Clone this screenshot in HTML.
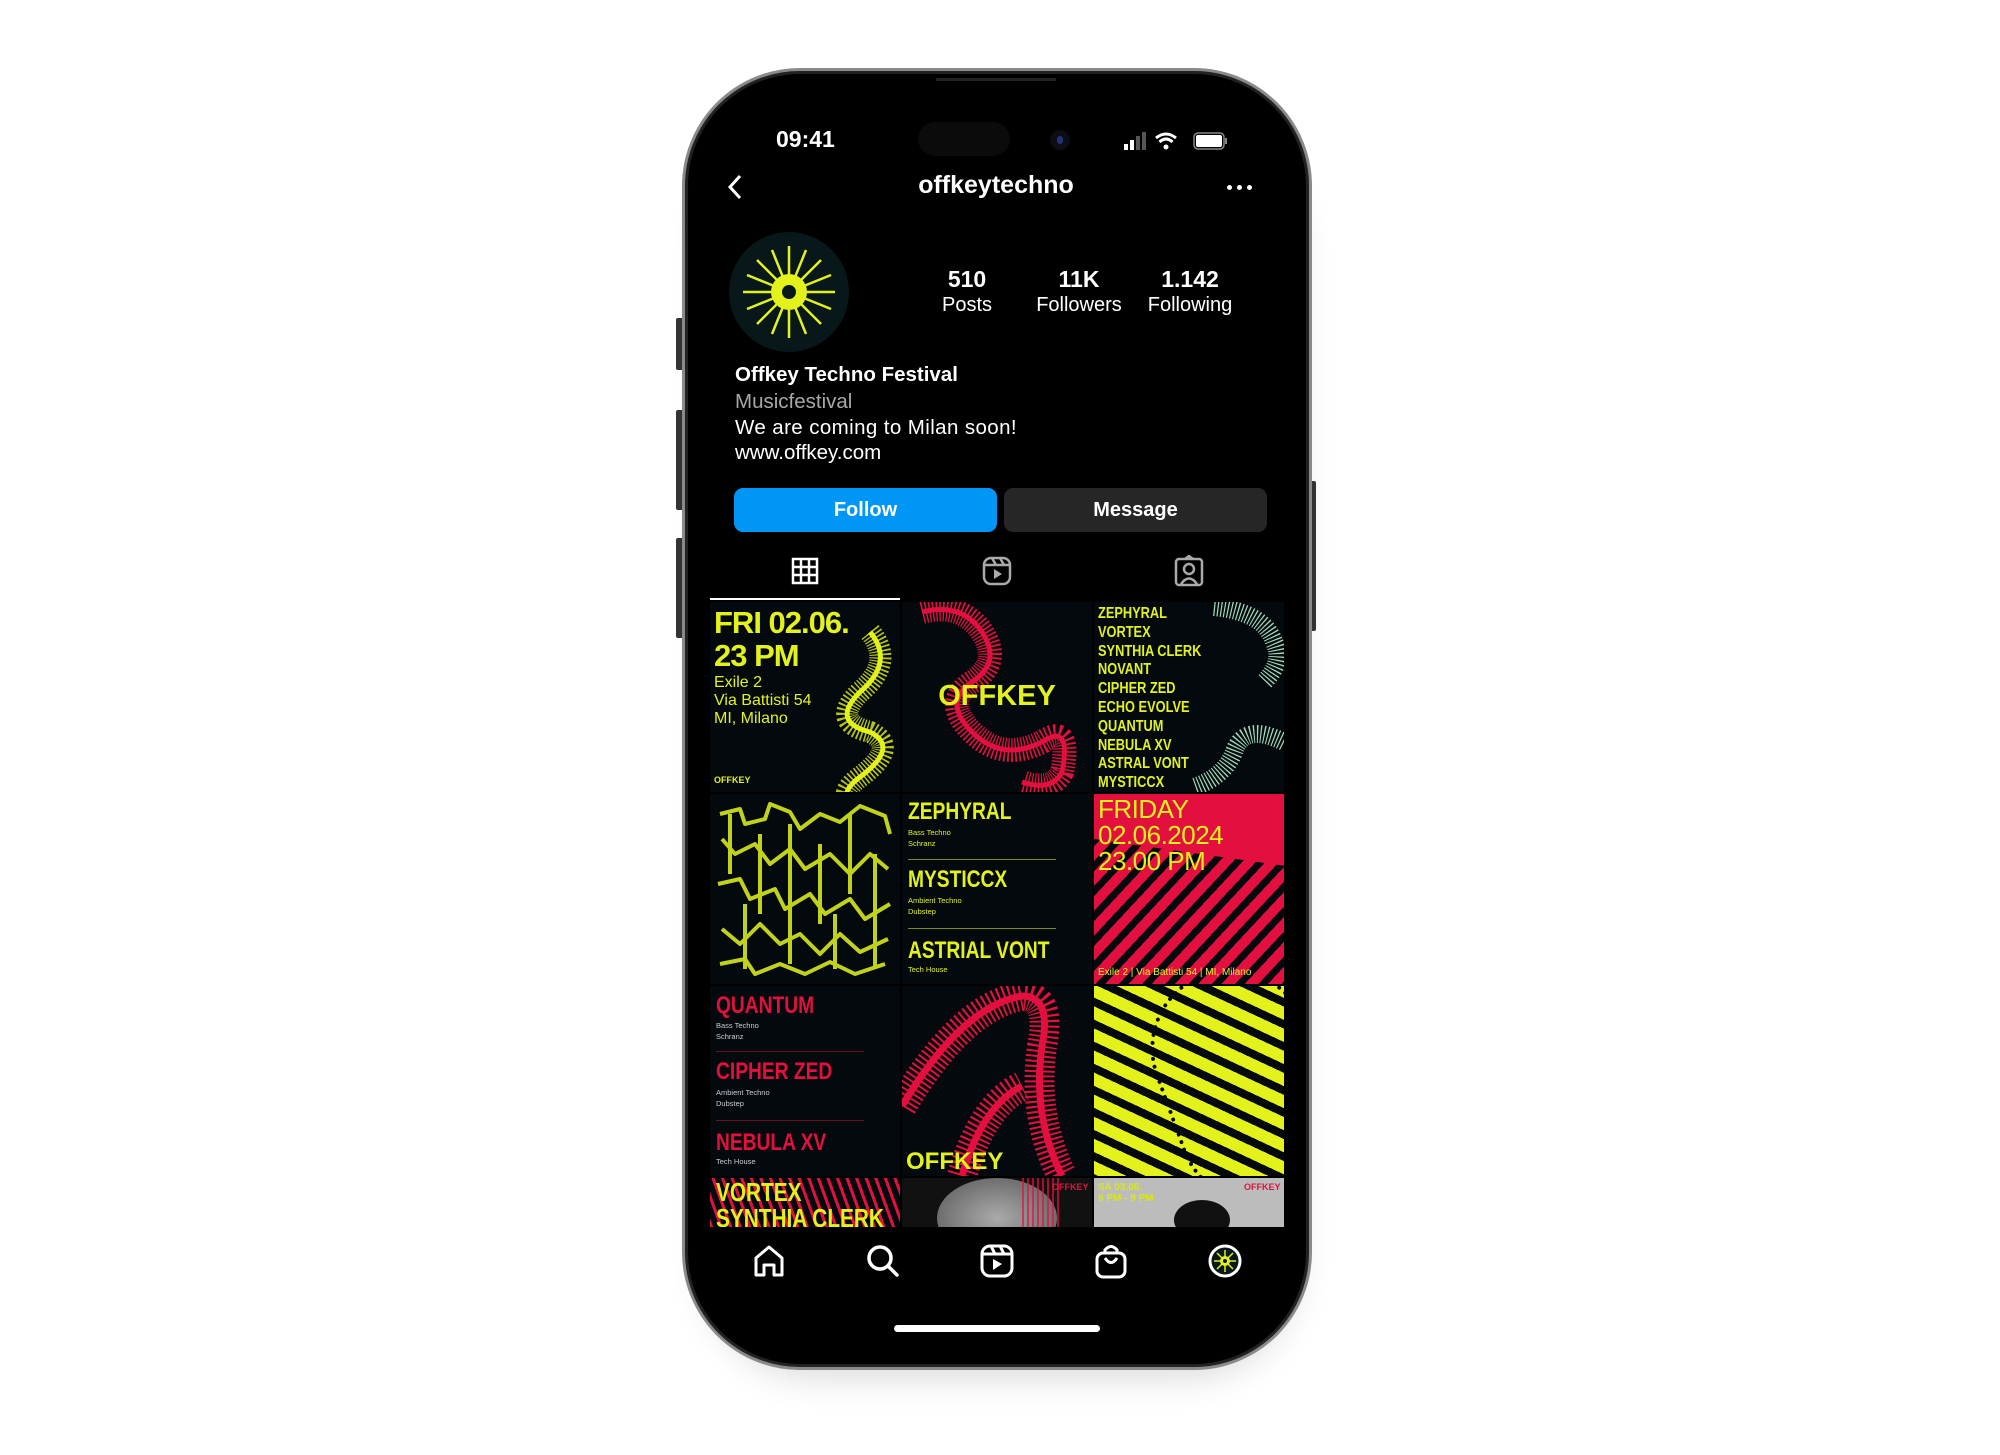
<!DOCTYPE html>
<html><head><meta charset="utf-8"><style>
*{margin:0;padding:0;box-sizing:border-box}
body{width:2000px;height:1455px;background:#fff;position:relative;overflow:hidden;font-family:"Liberation Sans",sans-serif}
#wrap{position:absolute;left:0;top:0;width:2000px;height:1455px;transform:translate(-4px,-2px)}
.a{position:absolute}
.w{color:#fff}
.cell{position:absolute;width:190px;height:190px;background:#03090c;overflow:hidden}
.y{color:#e3f21a}.r{color:#e3103f}
.cond{font-weight:bold;transform-origin:0 0;transform:scaleX(.8);white-space:nowrap}
</style></head><body><div id="wrap">
<div class="a" style="left:710px;top:120px;width:590px;height:1240px;border-radius:110px;box-shadow:0 18px 36px rgba(0,0,0,0.16)"></div>
<div class="a" style="left:680px;top:320px;width:8px;height:52px;background:#333;border-radius:2px"></div>
<div class="a" style="left:680px;top:412px;width:8px;height:100px;background:#333;border-radius:2px"></div>
<div class="a" style="left:680px;top:540px;width:8px;height:100px;background:#333;border-radius:2px"></div>
<div class="a" style="left:1312px;top:483px;width:8px;height:150px;background:#333;border-radius:2px"></div>
<div class="a" style="left:686px;top:70px;width:630px;height:1302px;border-radius:118px;background:#000;border:3px solid #8a8a8a;box-shadow:inset 0 0 0 3px #222"></div>
<div class="a" style="left:940px;top:80px;width:120px;height:3px;background:#222"></div>
<div class="a w" style="left:780px;top:128px;font-size:23px;font-weight:bold">09:41</div>
<div class="a" style="left:922px;top:124px;width:92px;height:34px;border-radius:17px;background:#0b0b0b"></div>
<div class="a" style="left:1054px;top:132px;width:20px;height:20px;border-radius:10px;background:#0d0d15"><div class="a" style="left:7px;top:6px;width:6px;height:8px;border-radius:3px;background:#223377"></div></div>
<svg class="a" style="left:1128px;top:132px" width="106" height="22" viewBox="0 0 106 22">
<rect x="0" y="14" width="4" height="6" fill="#fff"/><rect x="6" y="10" width="4" height="10" fill="#fff"/><rect x="12" y="6" width="4" height="14" fill="#555"/><rect x="18" y="2" width="4" height="18" fill="#555"/>
<path d="M32 8 Q42 0 52 8" stroke="#fff" stroke-width="3" fill="none"/><path d="M35.5 12 Q42 6 48.5 12" stroke="#fff" stroke-width="3" fill="none"/><circle cx="42" cy="17" r="2.5" fill="#fff"/>
<rect x="70" y="3" width="30" height="16" rx="4" stroke="#888" stroke-width="1.5" fill="none"/><rect x="72" y="5" width="26" height="12" rx="2" fill="#fff"/><rect x="101" y="8" width="2" height="6" fill="#888"/>
</svg>
<svg class="a" style="left:728px;top:175px" width="22" height="28"><path d="M16 3 L6 14 L16 25" stroke="#fff" stroke-width="3" fill="none"/></svg>
<div class="a w" style="left:850px;top:173px;width:300px;text-align:center;font-size:25px;font-weight:bold">offkeytechno</div>
<div class="a" style="left:1231px;top:187px;width:5px;height:5px;border-radius:3px;background:#fff;box-shadow:10px 0 #fff,20px 0 #fff"></div>
<div class="a" style="left:733px;top:234px;width:120px;height:120px;border-radius:60px;background:#08171a"></div>
<svg class="a" style="left:733px;top:234px" width="120" height="120" viewBox="0 0 120 120">
<g stroke="#e3f21a" stroke-width="2.5" fill="none">
<path d="M60 60 L60 14 M60 60 L60 106 M60 60 L14 60 M60 60 L106 60 M60 60 L28 28 M60 60 L92 92 M60 60 L92 28 M60 60 L28 92 M60 60 L43 18 M60 60 L77 102 M60 60 L18 77 M60 60 L102 43 M60 60 L77 18 M60 60 L43 102 M60 60 L18 43 M60 60 L102 77"/></g>
<circle cx="60" cy="60" r="18" fill="#e3f21a"/><circle cx="60" cy="60" r="7" fill="#08171a"/>
</svg>
<div class="a w" style="left:921px;top:268px;width:100px;text-align:center;font-size:23px;font-weight:bold">510</div>
<div class="a w" style="left:921px;top:296px;width:100px;text-align:center;font-size:20px">Posts</div>
<div class="a w" style="left:1028px;top:268px;width:110px;text-align:center;font-size:23px;font-weight:bold">11K</div>
<div class="a w" style="left:1028px;top:296px;width:110px;text-align:center;font-size:20px">Followers</div>
<div class="a w" style="left:1139px;top:268px;width:110px;text-align:center;font-size:23px;font-weight:bold">1.142</div>
<div class="a w" style="left:1139px;top:296px;width:110px;text-align:center;font-size:20px">Following</div>
<div class="a w" style="left:739px;top:365px;font-size:20.5px;font-weight:bold">Offkey Techno Festival</div>
<div class="a" style="left:739px;top:392px;font-size:20.5px;color:#a8a8a8">Musicfestival</div>
<div class="a w" style="left:739px;top:418px;font-size:20.5px;letter-spacing:0.4px">We are coming to Milan soon!</div>
<div class="a w" style="left:739px;top:443px;font-size:20.5px">www.offkey.com</div>
<div class="a w" style="left:738px;top:490px;width:263px;height:44px;border-radius:9px;background:#0096f6;text-align:center;line-height:44px;font-size:20px;font-weight:bold">Follow</div>
<div class="a w" style="left:1008px;top:490px;width:263px;height:44px;border-radius:9px;background:#262626;text-align:center;line-height:44px;font-size:20px;font-weight:bold">Message</div>
<svg class="a" style="left:795px;top:559px" width="28" height="28"><g stroke="#fff" stroke-width="2.5" fill="none"><rect x="2" y="2" width="24" height="24"/><path d="M10 2V26M18 2V26M2 10H26M2 18H26"/></g></svg>
<svg class="a" style="left:986px;top:557px" width="30" height="32"><g stroke="#aaa" stroke-width="2.5" fill="none"><rect x="2" y="3" width="26" height="26" rx="7"/><path d="M2 10H28M10 3L14 10M18 3L22 10"/></g><path d="M12 14L20 19L12 24Z" fill="#aaa"/></svg>
<svg class="a" style="left:1178px;top:557px" width="30" height="32"><g stroke="#aaa" stroke-width="2.5" fill="none"><rect x="2" y="4" width="26" height="26" rx="3"/><circle cx="15" cy="14" r="5"/><path d="M7 29Q15 18 23 29M11 4L15 1L19 4"/></g></svg>
<div class="a" style="left:714px;top:600px;width:190px;height:2px;background:#fff"></div>

<div class="cell" style="left:714px;top:604px">
<svg class="a" style="left:0;top:0" width="190" height="190"><path d="M160 30 Q185 60 150 90 Q120 120 160 130 Q190 145 150 175 Q130 190 140 200" stroke="#e3f21a" stroke-width="22" fill="none" stroke-dasharray="1.5 2" opacity="0.8"/><path d="M160 30 Q185 60 150 90 Q120 120 160 130 Q190 145 150 175 Q130 190 140 200" stroke="#e3f21a" stroke-width="5" fill="none"/></svg>
<div class="a y" style="left:4px;top:4px;font-size:31px;font-weight:bold;line-height:33px;letter-spacing:-1px">FRI 02.06.<br>23 PM</div>
<div class="a y" style="left:4px;top:72px;font-size:16px;line-height:18px">Exile 2<br>Via Battisti 54<br>MI, Milano</div>
<div class="a y" style="left:4px;top:173px;font-size:9px;font-weight:bold">OFFKEY</div>
</div>
<div class="cell" style="left:906px;top:604px">
<svg class="a" width="190" height="190"><path d="M20 10 Q60 0 80 30 Q100 60 70 80 Q40 100 70 130 Q100 160 140 140 Q170 120 160 170 Q150 190 120 180" stroke="#e3103f" stroke-width="24" fill="none" stroke-dasharray="1.5 2"/><path d="M20 10 Q60 0 80 30 Q100 60 70 80 Q40 100 70 130 Q100 160 140 140 Q170 120 160 170 Q150 190 120 180" stroke="#e3103f" stroke-width="5" fill="none"/></svg>
<div class="a y" style="left:0;width:190px;top:78px;text-align:center;font-size:29px;font-weight:bold">OFFKEY</div>
</div>
<div class="cell" style="left:1098px;top:604px">
<svg class="a" width="190" height="190"><path d="M120 5 Q170 10 180 40 Q190 60 170 80 M190 140 Q150 120 140 150 Q130 175 100 185" stroke="#9fdcbc" stroke-width="18" fill="none" stroke-dasharray="1.2 2.2"/></svg>
<div class="a y cond" style="left:4px;top:3px;font-size:16px;line-height:18.8px">ZEPHYRAL<br>VORTEX<br>SYNTHIA CLERK<br>NOVANT<br>CIPHER ZED<br>ECHO EVOLVE<br>QUANTUM<br>NEBULA XV<br>ASTRAL VONT<br>MYSTICCX</div>
</div>
<div class="cell" style="left:714px;top:796px">
<svg class="a" width="190" height="190"><g stroke="#d6e81c" stroke-width="4" fill="none" stroke-linejoin="round" opacity="0.9">
<path d="M10 20 L30 15 L35 30 L55 25 L60 10 L80 18 L90 35 L110 20 L130 28 L150 12 L175 22 L180 40"/>
<path d="M12 45 L25 60 L45 50 L60 70 L80 55 L95 75 L120 60 L140 80 L160 60 L178 75"/>
<path d="M8 90 L30 85 L40 105 L65 95 L75 115 L100 100 L115 120 L140 105 L155 125 L180 110"/>
<path d="M12 135 L30 150 L50 130 L70 150 L90 140 L110 160 L130 140 L150 158 L178 145"/>
<path d="M10 170 L35 165 L45 180 L70 170 L95 180 L120 168 L145 180 L175 170"/>
<path d="M20 20 L20 80 M50 40 L50 120 M80 30 L80 170 M110 50 L110 130 M140 20 L140 100 M165 60 L165 175 M35 110 L35 175 M125 120 L125 175"/></g></svg>
</div>
<div class="cell" style="left:906px;top:796px">
<div class="a y cond" style="left:6px;top:4px;font-size:24px">ZEPHYRAL</div>
<div class="a y" style="left:6px;top:33px;font-size:7.5px;line-height:11px">Bass Techno<br>Schranz</div>
<div class="a" style="left:6px;top:65px;width:148px;height:1px;background:#7f8a1a"></div>
<div class="a y cond" style="left:6px;top:72px;font-size:24px">MYSTICCX</div>
<div class="a y" style="left:6px;top:101px;font-size:7.5px;line-height:11px">Ambient Techno<br>Dubstep</div>
<div class="a" style="left:6px;top:134px;width:148px;height:1px;background:#7f8a1a"></div>
<div class="a y cond" style="left:6px;top:143px;font-size:24px">ASTRIAL VONT</div>
<div class="a y" style="left:6px;top:171px;font-size:7.5px">Tech House</div>
</div>
<div class="cell" style="left:1098px;top:796px;background:#e3103f">
<div class="a" style="left:-40px;top:60px;width:280px;height:180px;background:repeating-linear-gradient(-55deg,#03090c 0 7px,transparent 7px 17px);transform:rotate(8deg)"></div>
<div class="a y" style="left:4px;top:2px;font-size:26px;line-height:26px;letter-spacing:-0.5px">FRIDAY<br>02.06.2024<br>23.00 PM</div>
<div class="a y" style="left:4px;top:173px;font-size:10px;white-space:nowrap">Exile 2 | Via Battisti 54 | MI, Milano</div>
</div>
<div class="cell" style="left:714px;top:988px">
<div class="a r cond" style="left:6px;top:6px;font-size:24px">QUANTUM</div>
<div class="a" style="left:6px;top:34px;font-size:7.5px;line-height:11px;color:#ccc">Bass Techno<br>Schranz</div>
<div class="a" style="left:6px;top:65px;width:148px;height:1px;background:#6a1020"></div>
<div class="a r cond" style="left:6px;top:72px;font-size:24px">CIPHER ZED</div>
<div class="a" style="left:6px;top:101px;font-size:7.5px;line-height:11px;color:#ccc">Ambient Techno<br>Dubstep</div>
<div class="a" style="left:6px;top:134px;width:148px;height:1px;background:#6a1020"></div>
<div class="a r cond" style="left:6px;top:143px;font-size:24px">NEBULA XV</div>
<div class="a" style="left:6px;top:171px;font-size:7.5px;color:#ccc">Tech House</div>
</div>
<div class="cell" style="left:906px;top:988px">
<svg class="a" width="190" height="190"><path d="M0 120 Q60 20 120 10 Q150 10 140 60 Q130 130 160 190 M60 190 Q80 120 120 100" stroke="#e3103f" stroke-width="30" fill="none" stroke-dasharray="2 3"/><path d="M0 120 Q60 20 120 10 Q150 10 140 60 Q130 130 160 190 M60 190 Q80 120 120 100" stroke="#e3103f" stroke-width="7" fill="none"/></svg>
<div class="a y" style="left:4px;top:162px;font-size:24px;font-weight:bold">OFFKEY</div>
</div>
<div class="cell" style="left:1098px;top:988px;background:#e3f21a">
<div class="a" style="left:-60px;top:-40px;width:320px;height:280px;background:repeating-linear-gradient(40deg,#03090c 0 8px,transparent 8px 20px);transform:rotate(-15deg)"></div>
<div class="a" style="left:70px;top:-20px;width:160px;height:240px;border-radius:80px;border:4px dotted #03090c;transform:rotate(-20deg)"></div>
</div>
<div class="a" style="left:714px;top:1180px;width:574px;height:49px;overflow:hidden">
<div class="cell" style="left:0;top:0;background:#03090c">
<div class="a" style="left:0;top:0;width:190px;height:49px;background:repeating-linear-gradient(70deg,#e3103f 0 3px,transparent 3px 9px)"></div>
<div class="a y cond" style="left:6px;top:1px;font-size:26px;line-height:26px">VORTEX<br>SYNTHIA CLERK</div>
</div>
<div class="cell" style="left:192px;top:0;background:#111">
<div class="a" style="left:35px;top:0;width:120px;height:80px;border-radius:50%;background:radial-gradient(#aaa,#555)"></div>
<div class="a" style="left:120px;top:0;width:40px;height:49px;background:repeating-linear-gradient(90deg,#e3103f 0 2px,transparent 2px 5px);opacity:0.7"></div>
<div class="a r" style="left:150px;top:4px;font-size:9px;font-weight:bold">OFFKEY</div>
</div>
<div class="cell" style="left:384px;top:0;background:#bcbcbc">
<div class="a" style="left:4px;top:4px;font-size:10px;font-weight:bold;color:#d8e81a;line-height:11px">SA 03.06.<br>6 PM - 9 PM</div>
<div class="a" style="left:80px;top:22px;width:56px;height:40px;border-radius:50%;background:#111"></div>
<div class="a r" style="left:150px;top:4px;font-size:9px;font-weight:bold">OFFKEY</div>
</div>
</div>
<svg class="a" style="left:756px;top:1246px" width="34" height="34"><path d="M4 31V14L17 3L30 14V31H22V21H12V31Z" stroke="#fff" stroke-width="3" fill="none" stroke-linejoin="round"/></svg>
<svg class="a" style="left:870px;top:1246px" width="34" height="34"><circle cx="14" cy="14" r="11" stroke="#fff" stroke-width="3.5" fill="none"/><path d="M22 22L31 31" stroke="#fff" stroke-width="3.5" stroke-linecap="round"/></svg>
<svg class="a" style="left:984px;top:1246px" width="34" height="34"><g stroke="#fff" stroke-width="3" fill="none"><rect x="2" y="2" width="30" height="30" rx="8"/><path d="M2 10H32M11 2L15 10M20 2L24 10"/></g><path d="M13 15L22 20L13 26Z" fill="#fff"/></svg>
<svg class="a" style="left:1098px;top:1245px" width="34" height="36"><g stroke="#fff" stroke-width="3" fill="none"><rect x="3" y="10" width="28" height="24" rx="6"/><path d="M11 10V7Q17 0 23 7V10M11 15Q17 24 23 15"/></g></svg>
<svg class="a" style="left:1211px;top:1245px" width="36" height="36"><circle cx="18" cy="18" r="15" stroke="#fff" stroke-width="3" fill="#08171a"/><g stroke="#e3f21a" stroke-width="1.5"><path d="M18 7V29M7 18H29M10 10L26 26M26 10L10 26"/></g><circle cx="18" cy="18" r="5" fill="#e3f21a"/><circle cx="18" cy="18" r="2" fill="#08171a"/></svg>
<div class="a" style="left:898px;top:1327px;width:206px;height:7px;border-radius:4px;background:#fff"></div>
</div></body></html>
